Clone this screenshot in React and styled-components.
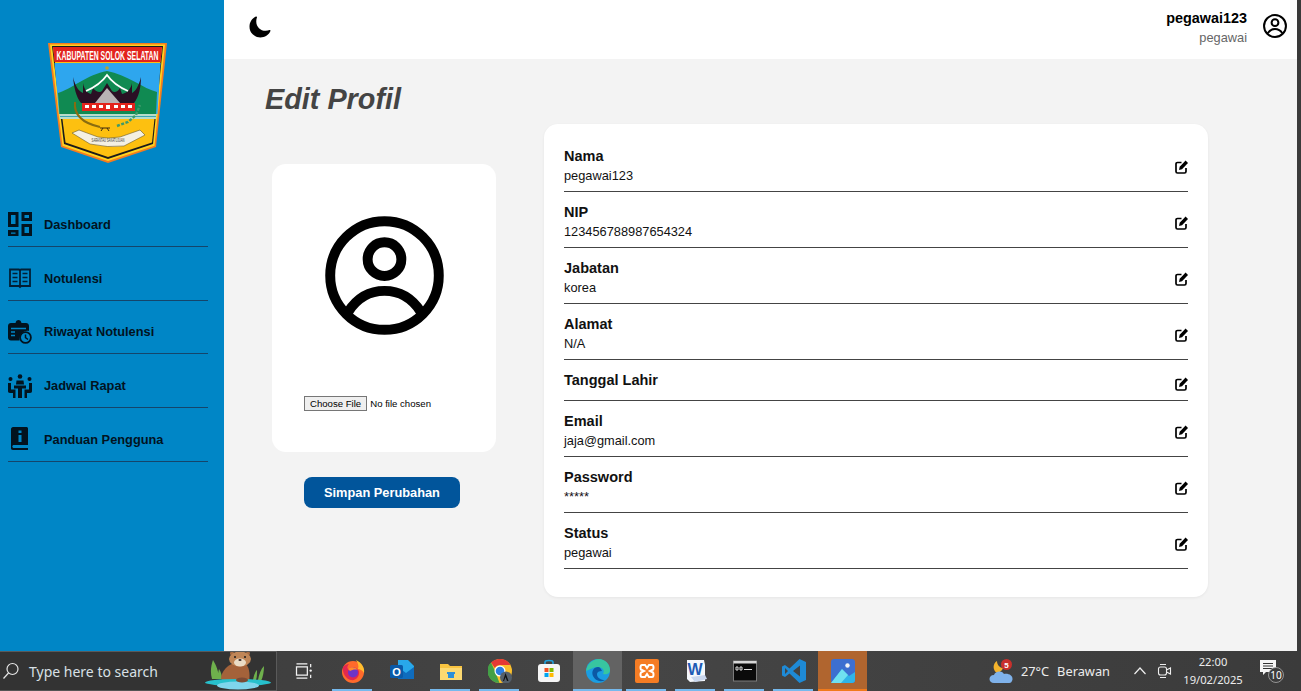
import React from 'react'
import styled, { createGlobalStyle } from 'styled-components'
import { IoMoon } from 'react-icons/io5'

const GlobalStyle = createGlobalStyle`
  html, body { margin: 0; padding: 0; height: 100%; overflow: hidden; }
  body { font-family: "Liberation Sans", Arial, sans-serif; }
  * { box-sizing: border-box; }
`

const Screen = styled.div`
  width: 1301px;
  height: 691px;
  display: flex;
  flex-direction: column;
  background: #f3f3f3;
`
const Top = styled.div`
  flex: 1;
  display: flex;
  min-height: 0;
`
const WindowEdge = styled.div`
  width: 4px;
  flex: none;
  background: #3a3a3a;
`
const Sidebar = styled.aside`
  width: 224px;
  flex: none;
  background: #0086c6;
`
const LogoBox = styled.div`
  height: 193px;
  padding: 43px 0 0 48px;
`
const NavRow = styled.div`
  height: 53.75px;
  margin: 0 16px 0 8px;
  padding-top: 10px;
  display: flex;
  align-items: center;
  gap: 12px;
  border-bottom: 1px solid #14456b;
  color: #02131f;
  font-size: 12.8px;
  font-weight: 700;
  svg { width: 24px; height: 24px; flex: none; }
`
const Content = styled.div`
  flex: 1;
  display: flex;
  flex-direction: column;
  min-width: 0;
`
const Header = styled.header`
  height: 59px;
  flex: none;
  background: #fff;
  display: flex;
  align-items: center;
  padding: 0 10px 7px 24px;
  > svg:first-child { width: 24px; height: 24px; margin-top: 2px; }
`
const UserBox = styled.div`
  margin-left: auto;
  margin-right: 16px;
  text-align: right;
  margin-top: 6px;
`
const UserName = styled.div`
  font-size: 14.4px;
  font-weight: 700;
  line-height: 18px;
  color: #000;
`
const UserRole = styled.div`
  font-size: 12.8px;
  line-height: 22px;
  color: #666;
`
const HeaderAvatar = styled.div`
  width: 24px;
  height: 24px;
  flex: none;
  svg { display: block; width: 24px; height: 24px; }
`
const Title = styled.h1`
  margin: 0;
  padding: 22px 0 0 41px;
  height: 65px;
  font-size: 28.8px;
  line-height: 36px;
  font-style: italic;
  font-weight: 700;
  color: #444;
`
const Columns = styled.div`
  display: flex;
  align-items: flex-start;
  padding-left: 48px;
  gap: 48px;
`
const LeftCol = styled.div`
  width: 224px;
  padding-top: 40px;
  display: flex;
  flex-direction: column;
  align-items: center;
`
const PhotoCard = styled.div`
  width: 224px;
  height: 288px;
  background: #fff;
  border-radius: 14px;
  padding-top: 52px;
  display: flex;
  flex-direction: column;
  > svg { width: 119px; height: 119px; margin: 0 0 61px 53px; }
`
const FileInput = styled.input`
  font-size: 9.6px;
  font-family: "Liberation Sans", Arial, sans-serif;
  margin: 0 0 0 32px;
  width: 170px;
  &::file-selector-button {
    padding: 1px 5px;
    margin-right: 3px;
    border: 1px solid #767676;
    border-radius: 0;
    background: #efefef;
    color: #000;
  }
`
const SaveButton = styled.button`
  margin-top: 25px;
  margin-right: 4px;
  width: 156px;
  height: 31px;
  background: #01559b;
  border: none;
  border-radius: 8px;
  color: #fff;
  font-family: inherit;
  font-size: 12.8px;
  font-weight: 700;
`
const InfoCard = styled.section`
  width: 664px;
  background: #fff;
  border-radius: 14px;
  padding: 12px 20px 28px;
  box-shadow: 0 1px 3px rgba(0, 0, 0, 0.06);
`
const FieldRow = styled.div`
  display: flex;
  align-items: center;
  justify-content: space-between;
  padding: 11px 0 7px;
  border-bottom: 1px solid #444;
`
const FieldLabel = styled.div`
  font-size: 14.5px;
  font-weight: 700;
  line-height: 18px;
  color: #111;
`
const FieldValue = styled.div`
  font-size: 12.8px;
  line-height: 16px;
  margin-top: 3px;
  min-height: 1px;
  color: #111;
`
const EditSvg = styled.svg`
  width: 13px;
  height: 14px;
  margin-top: 3px;
  flex: none;
`

const Taskbar = styled.footer`
  height: 40px;
  flex: none;
  display: flex;
  align-items: stretch;
  color: #ececec;
  background: linear-gradient(90deg, #3c3c3c 0%, #454545 50%, #3b3b3b 100%);
  font-family: "Noto Sans", "Open Sans", sans-serif;
`
const SearchBox = styled.div`
  width: 277px;
  flex: none;
  background: #333;
  border: 1px solid #5a5a5a;
  border-left: none;
  border-bottom-color: #555;
  display: flex;
  align-items: center;
  padding-left: 2px;
  position: relative;
  color: #d8e0e6;
  font-size: 14px;
  span { margin-left: 9px; }
`
const Apps = styled.div`
  display: flex;
  padding-left: 2px;
`
const AppSlot = styled.div`
  width: 49px;
  display: flex;
  align-items: center;
  justify-content: center;
  position: relative;
  background: ${p => (p.$tone === 'orange' ? '#b0652f' : p.$tone === 'hover' ? '#636363' : 'transparent')};
  &::after {
    content: '';
    position: absolute;
    bottom: 0;
    height: 2px;
    left: ${p => (p.$tone ? '0' : '4px')};
    right: ${p => (p.$tone ? '0' : '5px')};
    display: ${p => (p.$running ? 'block' : 'none')};
    background: ${p => (p.$tone === 'orange' ? '#f07a1c' : '#76b9ed')};
  }
  svg { width: ${p => p.$size || 24}px; height: ${p => p.$size || 24}px; }
`
const Tray = styled.div`
  margin-left: auto;
  display: flex;
  align-items: center;
  font-size: 12.8px;
  padding-right: 16px;
`
const TrayText = styled.span`
  margin-left: 8px;
`
const TrayGlyphs = styled.div`
  display: flex;
  align-items: center;
  gap: 10px;
  margin-left: 23px;
`
const Clock = styled.div`
  width: 66px;
  margin: 0 13px 0 7px;
  text-align: center;
  font-size: 11.2px;
  line-height: 18px;
`

const EditIcon = () => (
  <EditSvg viewBox="0 0 13 14">
    <path d="M6.500 2.500H2.500C1.600 2.500 1 3.100 1 4v7.500c0 .9.600 1.500 1.500 1.500h7c.9 0 1.500-.6 1.500-1.500V8" fill="none" stroke="#000" strokeWidth="1.700" />
    <path d="M10.600.6L13 3 7 9.200l-3 .7.700-3.100z" fill="#000" />
  </EditSvg>
)

const Row = ({ label, value }) => (
  <FieldRow>
    <div>
      <FieldLabel>{label}</FieldLabel>
      <FieldValue>{value}</FieldValue>
    </div>
    <EditIcon />
  </FieldRow>
)

const fields = [
  ['Nama', 'pegawai123'],
  ['NIP', '123456788987654324'],
  ['Jabatan', 'korea'],
  ['Alamat', 'N/A'],
  ['Tanggal Lahir', ''],
  ['Email', 'jaja@gmail.com'],
  ['Password', '*****'],
  ['Status', 'pegawai'],
]

const UserCircle = () => (
  <svg viewBox="0 0 24 24" fill="none" stroke="#000" strokeWidth="2">
    <circle cx="12" cy="12" r="10.950" />
    <circle cx="12" cy="8.700" r="3.400" />
    <path d="M4.700 19.300C6.500 16.500 9 15.100 12 15.100s5.500 1.400 7.300 4.200" />
  </svg>
)

const Logo = () => (
  <svg width="119" height="120" viewBox="0 0 119 120">
    <path d="M0 0H119L108 104L60 120L13 104Z" fill="#f57c1f" />
    <path d="M2 1.500H117L106.500 102.800L60 118L14.500 102.800Z" fill="#ffd21f" />
    <path d="M4 3H115L105 101L60 116L16 101Z" fill="#1a1a1a" />
    <path d="M5 4H114L104 99.500L60 114L17.500 99.500Z" fill="#fdc010" />
    <path d="M5 4H114L112.500 19H6.500Z" fill="#e3231c" />
    <g transform="translate(59.5 16.5) scale(0.53 1)">
      <text textAnchor="middle" fontFamily="Liberation Sans" fontWeight="700" fontSize="13" fill="#fff">KABUPATEN SOLOK SELATAN</text>
    </g>
    <path d="M6.500 20H112.500L109.500 71H11Z" fill="#2ea6ee" />
    <path d="M10 50C22 47 40 31 59 28C78 31 96 46 109 49L108 71H11.500Z" fill="#108a52" />
    <path d="M11.500 71H108.500L108 76H12Z" fill="#b6dccb" />
    <path d="M12 73.500H108" stroke="#3aa5b5" strokeWidth="1" />
    <path d="M25 34C26 44 28 54 33 60H86C91 54 93 44 93 34C91 42 88 48 84 50L84 40C83 46 79 50 74 51L72 45C70 49 66 50 64 48L59 40L54 48C52 50 48 49 45 45L43 51C39 50 36 46 35 40L35 50C30 48 27 42 25 34Z" fill="#2a1024" />
    <path d="M38 48Q52 42 59 32Q66 42 80 48" fill="none" stroke="#fff" strokeWidth="1.800" />
    <path d="M47 60L59 45L72 60Z" fill="#b9b3b5" />
    <rect x="34" y="60" width="53" height="8" fill="#e3231c" />
    <path d="M37 62h4v3h-4zM44 62h4v3h-4zM51 62h4v3h-4zM58 62h4v4h-4zM66 62h4v3h-4zM73 62h4v3h-4zM80 62h4v3h-4z" fill="#fff" />
    <circle cx="59" cy="25" r="1.800" fill="#b0a33a" />
    <path d="M27 59Q25 78 52 84" fill="none" stroke="#8a6c10" strokeWidth="2" />
    <path d="M52 85H62M55 85l-2 3M59 85l2 3" fill="none" stroke="#3a2a10" strokeWidth="1" />
    <path d="M69 83L80 79L88 72L92 62" fill="none" stroke="#3e9a6a" strokeWidth="2.400" strokeDasharray="3 1.500" />
    <path d="M24 90L31 87L50 94Q60 96 72 94L92 87L97 92L76 103Q60 105 42 101Z" fill="#f4f0e2" stroke="#6a5a2a" strokeWidth="0.600" />
    <g transform="translate(60 99) scale(0.6 1)">
      <text textAnchor="middle" fontFamily="Liberation Sans" fontSize="4.500" fill="#333">SARANTAU SAKATUJUAN</text>
    </g>
  </svg>
)

const DashboardIcon = () => (
  <svg viewBox="0 0 24 24" fill="#02131f">
    <path d="M0 0h10.500v15H0zM3 3v9h4.500V3zM13.500 0H24v9H13.500zM16.500 3v3H21V3zM0 18h10.500v6H0zM3 20.500v1.200h4.500v-1.200zM13.500 12H24v12H13.500zM16.500 15v6H21v-6z" fillRule="evenodd" />
  </svg>
)
const BookIcon = () => (
  <svg viewBox="0 0 24 24" fill="none" stroke="#021f35" strokeWidth="1.800">
    <path d="M2 3.500h9l1 1 1-1h9V20h-9l-1 1-1-1H2zM12 4.500V21" />
    <path d="M4.500 7.500h5M4.500 11.500h5M4.500 15.500h5M14.500 7.500h5M14.500 11.500h5M14.500 15.500h5" strokeWidth="1.500" />
  </svg>
)
const HistoryIcon = () => (
  <svg viewBox="0 0 24 24">
    <path d="M3 3h4.500C8 .6 9.500 0 10.500 0s2.500.6 3 3H18c1.700 0 3 1.300 3 3v5c-5-1-10 3-9.500 9.500H3c-1.700 0-3-1.300-3-3V6c0-1.700 1.300-3 3-3z" fill="#02131f" />
    <path d="M3 8.500h15M3 12h4M3 15.500h4" stroke="#0086c6" strokeWidth="1.500" />
    <circle cx="17.500" cy="17.500" r="5.400" fill="#0086c6" stroke="#02131f" strokeWidth="1.800" />
    <path d="M17.500 14.500v3.200l2.500 1.800" stroke="#02131f" strokeWidth="1.500" fill="none" />
  </svg>
)
const MeetingIcon = () => (
  <svg viewBox="0 0 24 24" fill="#02131f">
    <circle cx="12" cy="2.500" r="2.300" />
    <circle cx="2.500" cy="5" r="2" />
    <circle cx="21.500" cy="5" r="2" />
    <path d="M8.500 6.500h7l.5 4H8zM6 11.500h12v3H6zM0 9h3v6.500h4.500V24H5v-5H2c-1.500 0-2-1-2-2zM24 9h-3v6.500h-4.500V24H19v-5h3c1.500 0 2-1 2-2zM10 14.500h4V24h-4z" />
  </svg>
)
const GuideIcon = () => (
  <svg viewBox="0 0 24 24">
    <path d="M5 0h13.500c.8 0 1.500.7 1.500 1.500V18H6c-1.100 0-1.700.6-1.700 1.500S4.900 21 6 21h14v2H5c-1.500 0-2-1-2-2V2c0-1 1-2 2-2z" fill="#02131f" />
    <path d="M10.500 3.500h3V6h-3zM10.500 8h3v7h-3z" fill="#0086c6" />
  </svg>
)

const SearchGlyph = () => (
  <svg width="18" height="18" viewBox="0 0 18 18" fill="none" stroke="#e6e6e6" strokeWidth="1.200">
    <circle cx="10.500" cy="7" r="5.500" />
    <path d="M6.500 11L1.500 16.500" />
  </svg>
)
const OtterBox = styled.svg`
  position: absolute;
  left: 204px;
  top: 0;
`
const Otter = () => (
  <OtterBox width="68" height="38" viewBox="0 0 68 38">
    <path d="M8 27C6 20 7 14 9 8c3 5 6 12 6 19zM15 27c-1-4-1-7 0-10 2 3 3 6 3 10zM54 28c1-6 3-11 6-14 0 5-1 11-3 15zM49 28c1-5 2-8 4-10 0 4 0 7-1 10z" fill="#6fb04c" />
    <path d="M17 27c0-8 7-14 13-16l12 1c4 5 4 12 3 18-8 3-21 3-28-3z" fill="#a4623a" />
    <circle cx="28" cy="1.500" r="2" fill="#a86c42" />
    <circle cx="44" cy="1.500" r="2" fill="#a86c42" />
    <ellipse cx="36" cy="7" rx="11" ry="7.500" fill="#c08657" />
    <ellipse cx="36" cy="10.500" rx="6" ry="4" fill="#eadcc6" />
    <circle cx="31" cy="5" r="1" fill="#1d1d1d" />
    <circle cx="41" cy="5" r="1" fill="#1d1d1d" />
    <ellipse cx="36" cy="8" rx="1.600" ry="1" fill="#3a2a2a" />
    <ellipse cx="34" cy="30.500" rx="33" ry="3.500" fill="#27c0cc" />
    <ellipse cx="34" cy="33.500" rx="21" ry="4" fill="#7fd5ec" />
    <ellipse cx="38" cy="28" rx="6" ry="2.500" fill="#7b4b35" />
  </OtterBox>
)
const TaskView = () => (
  <svg viewBox="0 0 24 24" fill="none" stroke="#f2f2f2" strokeWidth="1.500">
    <path d="M3 7h13v10H3zM3 3.500h13M3 20.500h13M20 3.500v4M20 16.500v4" />
    <circle cx="20" cy="11.500" r="1.400" fill="#f2f2f2" stroke="none" />
  </svg>
)
const Firefox = () => (
  <svg viewBox="0 0 24 24">
    <circle cx="12" cy="13" r="11" fill="#ff6a2b" />
    <path d="M15 1c6 3 9 8 8 13-2-3-4-4-6-4 1-3 0-6-2-9z" fill="#ffbd2e" />
    <path d="M2 8c2-2 4-3 6-3-2 2-2 4-1 5 4-3 9-2 11 2 1 5-3 10-8 9C5 20 1 14 2 8z" fill="#e22850" />
    <circle cx="12" cy="13.500" r="5" fill="#6e34c8" />
    <path d="M7 10c3-3 8-2 10 1-3-1-6 0-8 1z" fill="#ff8a2c" />
  </svg>
)
const Outlook = () => (
  <svg viewBox="0 0 24 24">
    <path d="M8 1h10l6 6v11c0 1-1 2-2 2H8z" fill="#28a8ea" />
    <path d="M8 8l8 6 8-6v12H8z" fill="#0f6cbd" />
    <rect x="0" y="6" width="13" height="13" rx="1.500" fill="#0a5aa8" />
    <text x="6.500" y="16.500" textAnchor="middle" fontFamily="Liberation Sans" fontWeight="700" fontSize="11" fill="#fff">O</text>
  </svg>
)
const Folder = () => (
  <svg viewBox="0 0 24 24">
    <path d="M1 5h8l2 2h12v14H1z" fill="#f9c440" />
    <path d="M1 9h22v12H1z" fill="#fcd971" />
    <path d="M8 13h8v2h-1v4H9v-4H8z" fill="#2d8fd8" />
  </svg>
)
const Chrome = () => (
  <svg viewBox="0 0 24 24">
    <circle cx="12" cy="12" r="12" fill="#fbc02d" />
    <path d="M12 0a12 12 0 0 1 10.400 6H12a6 6 0 0 0-5.200 3L3 3.500A12 12 0 0 1 12 0z" fill="#e53935" />
    <path d="M3 3.500l4 8.500 4.500 12A12 12 0 0 1 3 3.500z" fill="#43a047" />
    <circle cx="12" cy="12" r="5.500" fill="#fff" />
    <circle cx="12" cy="12" r="4.300" fill="#2a7de1" />
    <circle cx="18" cy="18.500" r="6" fill="#55606b" />
    <path d="M17.500 14l3 8h-1.500l-1.500-4-1.500 4H15z" fill="#111" />
  </svg>
)
const Store = () => (
  <svg viewBox="0 0 24 24">
    <path d="M8 6V3c0-2 8-2 8 0v3" fill="none" stroke="#1fa3e0" strokeWidth="1.500" />
    <rect x="1" y="5" width="22" height="18" rx="3" fill="#f5f5f5" />
    <rect x="7.500" y="9" width="4" height="4" fill="#f25022" />
    <rect x="12.500" y="9" width="4" height="4" fill="#7fba00" />
    <rect x="7.500" y="14" width="4" height="4" fill="#00a4ef" />
    <rect x="12.500" y="14" width="4" height="4" fill="#ffb900" />
  </svg>
)
const Edge = () => (
  <svg viewBox="0 0 24 24">
    <circle cx="12" cy="12" r="12" fill="#1b9de2" />
    <path d="M0 12C1 4 8 0 13 0c6 0 11 5 11 11 0 4-4 5-7 4 2-3 0-7-5-7-5 0-9 3-12 4z" fill="#37c6a0" />
    <path d="M12 8c-4 0-7 4-5 9 2 4 7 7 12 4-4 0-8-2-8-6 0-2 2-3 5-3-1-2-2-4-4-4z" fill="#0c59a4" />
  </svg>
)
const Xampp = () => (
  <svg viewBox="0 0 24 24">
    <rect width="24" height="24" rx="2" fill="#f57c24" />
    <path d="M7 6h3l2 3 2-3h3c2 0 2 5 0 5l-2 1 2 1c2 0 2 5 0 5h-3l-2-3-2 3H7c-2 0-2-5 0-5l2-1-2-1c-2 0-2-5 0-5z" fill="none" stroke="#fff" strokeWidth="2" />
  </svg>
)
const Word = () => (
  <svg viewBox="0 0 24 24">
    <path d="M3 1h17l1 5v16l-15 1-3-3z" fill="#f4f7fc" />
    <text x="11" y="16" textAnchor="middle" fontFamily="Liberation Sans" fontWeight="700" fontSize="16" fill="#1e5bb5">W</text>
    <path d="M7 18l14-2 2 4-12 3z" fill="#c9d7ee" />
  </svg>
)
const Cmd = () => (
  <svg viewBox="0 0 24 24">
    <rect x="0.500" y="2" width="23" height="20" fill="#0b0b0b" stroke="#7c7c7c" />
    <rect x="0.500" y="2" width="23" height="2.500" fill="#d8d8d8" />
    <path d="M3 8h2v3H3zM7 8h2v3H7zM11 10.500h8" stroke="#ddd" strokeWidth="1" fill="none" />
  </svg>
)
const VsCode = () => (
  <svg viewBox="0 0 24 24">
    <path d="M17.500 0L24 3v18l-6.500 3L7.500 14.500 3 18l-3-1.500V7.500L3 6l4.500 3.500zM18 6.500L11 12l7 5.500zM3 9v6l3-3z" fill="#1e8ad6" fillRule="evenodd" />
  </svg>
)
const Photos = () => (
  <svg viewBox="0 0 24 24">
    <rect width="24" height="24" rx="3" fill="#3d6fd0" />
    <path d="M0 24L11 10l7 7 6-4v8a3 3 0 0 1-3 3z" fill="#2fb4e8" />
    <path d="M0 24l11-14 6 6-7 8z" fill="#6fe0f0" />
    <circle cx="16.500" cy="6.500" r="2.200" fill="#f4f4f4" />
  </svg>
)
const Cloud = () => (
  <svg width="24" height="26" viewBox="0 0 24 26">
    <path d="M8 3a7 7 0 0 0 0 12 8 8 0 0 0 6-5C11 10 8 7 8 3z" fill="#f4b32c" />
    <path d="M5 25c-6 0-6-8 0-8 1-4 8-5 10-1 6-1 10 3 8 7-1 2-2 2-4 2z" fill="#7fb2ea" />
    <circle cx="17.500" cy="6.500" r="5.500" fill="#c9302c" />
    <text x="17.500" y="9.500" textAnchor="middle" fontFamily="Liberation Sans" fontWeight="700" fontSize="8" fill="#fff">5</text>
  </svg>
)
const Chevron = () => (
  <svg width="14" height="14" viewBox="0 0 14 14" fill="none" stroke="#eee" strokeWidth="1.200">
    <path d="M1.500 10L7 4l5.500 6" />
  </svg>
)
const MeetNow = () => (
  <svg width="16" height="18" viewBox="0 0 16 18" fill="none" stroke="#eee" strokeWidth="1.100">
    <rect x="1.500" y="5" width="8" height="8" rx="2" />
    <path d="M9.500 8l4-2v6l-4-2M3 2.500h6M3 15.500h6" />
  </svg>
)
const Notify = () => (
  <svg width="26" height="26" viewBox="0 0 26 26">
    <path d="M1 2h16v12H7l-3 3v-3H1z" fill="#f5f5f5" />
    <path d="M4 5.500h10M4 8h10M4 10.500h10" stroke="#333" strokeWidth="1" />
    <circle cx="17" cy="17" r="7.500" fill="#3c3c3c" stroke="#aaa" strokeWidth="0.800" />
    <text x="17" y="20.500" textAnchor="middle" fontFamily="Noto Sans" fontSize="10" fill="#fff">10</text>
  </svg>
)

const navItems = [
  ['Dashboard', <DashboardIcon key="d" />],
  ['Notulensi', <BookIcon key="n" />],
  ['Riwayat Notulensi', <HistoryIcon key="r" />],
  ['Jadwal Rapat', <MeetingIcon key="j" />],
  ['Panduan Pengguna', <GuideIcon key="p" />],
]

const apps = [
  { icon: <TaskView />, size: 20 },
  { icon: <Firefox />, running: true },
  { icon: <Outlook /> },
  { icon: <Folder />, running: true },
  { icon: <Chrome />, running: true },
  { icon: <Store /> },
  { icon: <Edge />, running: true, tone: 'hover' },
  { icon: <Xampp />, running: true },
  { icon: <Word />, running: true },
  { icon: <Cmd />, running: true },
  { icon: <VsCode />, running: true },
  { icon: <Photos />, running: true, tone: 'orange' },
]

export default function App() {
  return (
    <Screen>
      <GlobalStyle />
      <Top>
        <Sidebar>
          <LogoBox>
            <Logo />
          </LogoBox>
          {navItems.map(([label, icon]) => (
            <NavRow key={label}>
              {icon}
              {label}
            </NavRow>
          ))}
        </Sidebar>
        <Content>
          <Header>
            <IoMoon />
            <UserBox>
              <UserName>pegawai123</UserName>
              <UserRole>pegawai</UserRole>
            </UserBox>
            <HeaderAvatar><UserCircle /></HeaderAvatar>
          </Header>
          <Title>Edit Profil</Title>
          <Columns>
            <LeftCol>
              <PhotoCard>
                <UserCircle />
                <FileInput type="file" />
              </PhotoCard>
              <SaveButton>Simpan Perubahan</SaveButton>
            </LeftCol>
            <InfoCard>
              {fields.map(([label, value]) => (
                <Row key={label} label={label} value={value} />
              ))}
            </InfoCard>
          </Columns>
        </Content>
        <WindowEdge />
      </Top>
      <Taskbar>
        <SearchBox>
          <SearchGlyph />
          <span>Type here to search</span>
          <Otter />
        </SearchBox>
        <Apps>
          {apps.map((a, i) => (
            <AppSlot key={i} $running={a.running} $tone={a.tone} $size={a.size}>{a.icon}</AppSlot>
          ))}
        </Apps>
        <Tray>
          <Cloud />
          <TrayText>27°C</TrayText>
          <TrayText>Berawan</TrayText>
          <TrayGlyphs>
            <Chevron />
            <MeetNow />
          </TrayGlyphs>
          <Clock>22:00<br />19/02/2025</Clock>
          <Notify />
        </Tray>
      </Taskbar>
    </Screen>
  )
}
